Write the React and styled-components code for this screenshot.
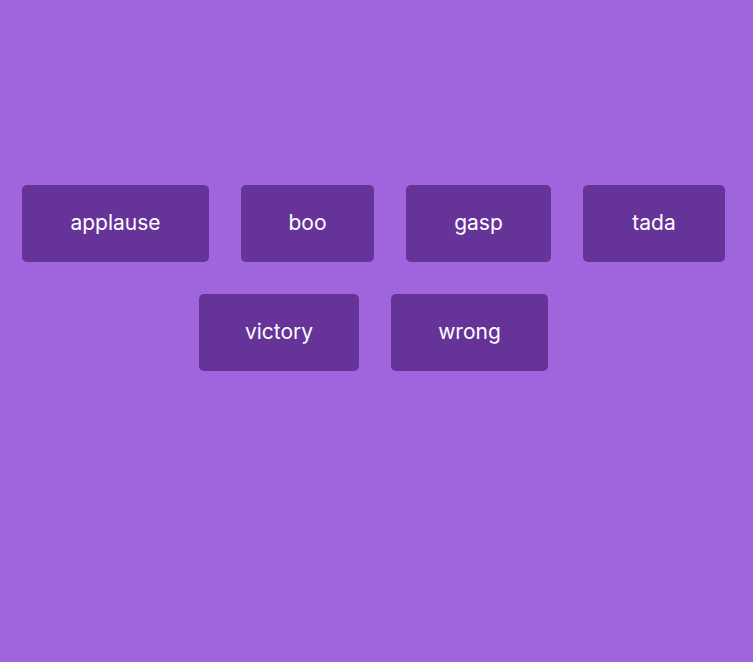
import React from "react";
import styled, { createGlobalStyle } from "styled-components";

const GlobalStyle = createGlobalStyle`
  html, body {
    margin: 0;
    padding: 0;
    background: #a064dc;
  }
  body {
    font-family: "Inter", "Noto Sans", sans-serif;
  }
`;

const Page = styled.div`
  min-height: 100vh;
  box-sizing: border-box;
  padding: 185px 12px 0 6px;
`;

const Board = styled.div`
  display: flex;
  flex-wrap: wrap;
  justify-content: center;
  gap: 32px;
`;

const SoundButton = styled.button`
  width: ${({ $w }) => $w}px;
  height: 77px;
  box-sizing: border-box;
  padding: 0 0 2px;
  border: none;
  border-radius: 5px;
  background: #663399;
  color: #ffffff;
  font-family: "Inter", "Noto Sans", sans-serif;
  font-size: 21px;
  font-weight: 400;
  cursor: pointer;
`;

const sounds = [
  { name: "applause", w: 187 },
  { name: "boo", w: 133 },
  { name: "gasp", w: 145 },
  { name: "tada", w: 142 },
  { name: "victory", w: 160 },
  { name: "wrong", w: 157 },
];

const App = () => {
  return (
    <Page>
      <GlobalStyle />
      <Board>
        {sounds.map((s) => (
          <SoundButton key={s.name} $w={s.w}>
            {s.name}
          </SoundButton>
        ))}
      </Board>
    </Page>
  );
};

export default App;
